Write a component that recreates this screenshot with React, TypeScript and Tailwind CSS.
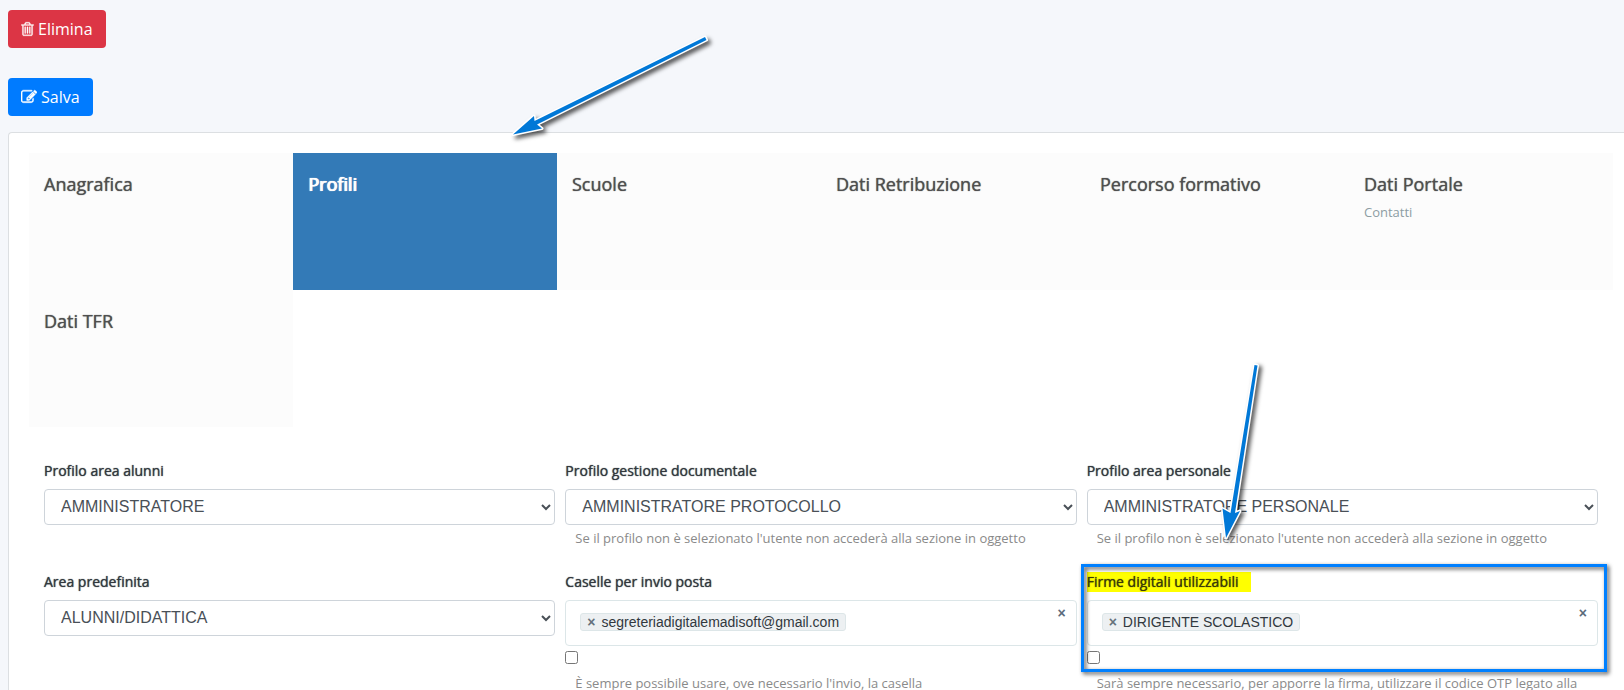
import { useState } from "react"
import type { ReactNode } from "react"

const tabs = [
    { title: "Anagrafica" },
    { title: "Profili" },
    { title: "Scuole" },
    { title: "Dati Retribuzione" },
    { title: "Percorso formativo" },
    { title: "Dati Portale", note: "Contatti" },
    { title: "Dati TFR" },
]

const profileHelp = "Se il profilo non è selezionato l'utente non accederà alla sezione in oggetto"

function TrashIcon(){
    return(
        <svg viewBox="192 0 1408 1792" className="h-4 w-[13px] fill-current stroke-current" strokeWidth="30" aria-hidden="true">
            <path d="M704 1376v-704q0-14-9-23t-23-9h-64q-14 0-23 9t-9 23v704q0 14 9 23t23 9h64q14 0 23-9t9-23zm256 0v-704q0-14-9-23t-23-9h-64q-14 0-23 9t-9 23v704q0 14 9 23t23 9h64q14 0 23-9t9-23zm256 0v-704q0-14-9-23t-23-9h-64q-14 0-23 9t-9 23v704q0 14 9 23t23 9h64q14 0 23-9t9-23zm128-864h-896v948q0 22 7 40.500t14.500 27 10.500 8.500h832q3 0 10.500-8.500t14.500-27 7-40.500v-948zm-672-128h448l-48-117q-7-9-17-11h-317q-10 2-17 11zm928 32v64q0 14-9 23t-23 9h-96v948q0 83-47 143.500t-113 60.500h-832q-66 0-113-58.500t-47-141.500v-952h-96q-14 0-23-9t-9-23v-64q0-14 9-23t23-9h309l70-167q15-37 54-63t79-26h320q40 0 79 26t54 63l70 167h309q14 0 23 9t9 23z"/>
        </svg>
    )
}

function EditIcon(){
    return(
        <svg viewBox="0 0 1792 1792" className="h-4 w-4 fill-current stroke-current" strokeWidth="50" aria-hidden="true">
            <path d="M888 1184l116-116-152-152-116 116v56h96v96h56zm440-720q-16-16-33 1l-350 350q-17 17-1 33t33-1l350-350q17-17 1-33zm80 594v190q0 119-84.500 203.500t-203.500 84.500h-832q-119 0-203.500-84.500t-84.500-203.500v-832q0-119 84.500-203.500t203.500-84.500h832q63 0 117 25 15 7 18 23 3 17-9 29l-49 49q-14 14-32 8-23-6-45-6h-832q-66 0-113 47t-47 113v832q0 66 47 113t113 47h832q66 0 113-47t47-113v-126q0-13 9-22l64-64q15-15 35-7t20 29zm-96-738l288 288-672 672h-288v-288zm444 132l-92 92-288-288 92-92q28-28 68-28t68 28l152 152q28 28 28 68t-28 68z"/>
        </svg>
    )
}

function SelectField({ id, label, value, help }: { id: string, label: string, value: string, help?: string }){
    return(
        <div className="h-[111px]">
            <label htmlFor={id} className="mb-2 block text-sm leading-5 font-medium text-[#32383e] [text-shadow:0_0_1px_currentColor]">{label}</label>
            <select id={id} className="h-9 w-full rounded border border-[#ced4da] bg-white px-3 pb-0.5 font-['Liberation_Sans',Arial,sans-serif] text-base text-[#495057]">
                <option>{value}</option>
            </select>
            {help && <p className="mt-[3px] px-2.5 text-[13px] leading-5 text-[#8a8a8a]">{help}</p>}
        </div>
    )
}

function TagField({ id, label, tag, help, marked, children }: { id: string, label: string, tag: string, help: string, marked?: boolean, children?: ReactNode }){
    return(
        <div className="relative">
            <label htmlFor={id} className="mb-2 block text-sm leading-5 font-medium text-[#32383e] [text-shadow:0_0_1px_currentColor]">
                <span className={marked ? "inline-block bg-[#ffff00] pr-3 text-[#3a3a08]" : ""}>{label}</span>
            </label>
            <div className="flex h-[46px] items-start justify-between rounded border border-[#dce6e8] bg-white pt-3 pr-2.5 pl-3.5 font-['Liberation_Sans',Arial,sans-serif]">
                <span className="flex h-[18px] items-center gap-1.5 rounded-[3px] border border-[#dde6e8] bg-[#edf0f2] px-1.5 text-sm text-[#32383e]">
                    <button type="button" aria-label={"Rimuovi " + tag} className="text-sm leading-4 font-bold text-[#66727c]">×</button>
                    {tag}
                </span>
                <button type="button" aria-label="Svuota" className="-mt-2 text-sm leading-4 font-bold text-[#5b6b7c]">×</button>
            </div>
            <input id={id} type="checkbox" className="mt-[5px] block h-[13px] w-[13px]"/>
            <p className="mt-3 px-2.5 text-[13px] leading-[14px] text-[#8a8a8a]">{help}</p>
            {children}
        </div>
    )
}

export default function App(){
    const [active,setActive] = useState<number>(1)

    return(
        <div className="relative flex min-h-screen flex-col items-start overflow-hidden bg-[#f5f7fb] pt-2.5 pl-2 font-['Open_Sans',sans-serif]">
            <button type="button" className="flex h-[38px] shrink-0 items-center gap-1 rounded bg-[#dc3545] px-[13px] text-base text-white">
                <TrashIcon/>
                Elimina
            </button>
            <button type="button" className="mt-[30px] flex h-[38px] shrink-0 items-center gap-1 rounded bg-[#007bff] px-[13px] text-base text-white">
                <EditIcon/>
                Salva
            </button>

            <div className="mt-4 w-full grow rounded-tl border-t border-l border-[#dcdfe2] bg-white pt-5 pr-[11px] pl-5">
                <nav className="grid grid-cols-6">
                    {tabs.map((tab,index)=>(
                        <a key={tab.title} href="#" onClick={()=>{setActive(index)}}
                        className={index === active ? "h-[137px] bg-[#337ab7] px-[15px] pt-[18px] text-white" : "h-[137px] bg-[#fcfcfc] px-[15px] pt-[18px] text-[#4f4f4f]"}>
                            <h4 className={index === active ? "text-lg leading-[26px] font-medium [text-shadow:0_0_1px_currentColor,1px_0_0_currentColor]" : "text-lg leading-[26px] font-medium [text-shadow:0_0_1px_currentColor]"}>{tab.title}</h4>
                            {tab.note && <p className="mt-[3px] text-[13px] leading-6 text-[#8d9da3]">{tab.note}</p>}
                        </a>
                    ))}
                </nav>

                <form className="mt-[34px] grid grid-cols-3 gap-x-2.5 px-[15px]">
                    <SelectField id="alunni" label="Profilo area alunni" value="AMMINISTRATORE"/>
                    <SelectField id="documentale" label="Profilo gestione documentale" value="AMMINISTRATORE PROTOCOLLO" help={profileHelp}/>
                    <SelectField id="personale" label="Profilo area personale" value="AMMINISTRATORE PERSONALE" help={profileHelp}/>
                    <SelectField id="area" label="Area predefinita" value="ALUNNI/DIDATTICA"/>
                    <TagField id="caselle" label="Caselle per invio posta" tag="segreteriadigitalemadisoft@gmail.com" help="È sempre possibile usare, ove necessario l'invio, la casella"/>
                    <TagField id="firme" label="Firme digitali utilizzabili" tag="DIRIGENTE SCOLASTICO" help="Sarà sempre necessario, per apporre la firma, utilizzare il codice OTP legato alla" marked>
                        {/* frame and arrow laid over the signature field */}
                        <div className="pointer-events-none absolute -top-2 -right-[9px] -left-1.5 h-[108px] border-3 border-[#0080ff] drop-shadow-[2px_2px_2px_rgba(0,0,0,0.7)]"/>
                        <svg viewBox="0 0 60 200" className="pointer-events-none absolute -top-[222px] left-[123px] h-[200px] w-[60px] drop-shadow-[3px_2px_2px_rgba(0,0,0,0.65)]" aria-hidden="true">
                            <path d="M44.500 15L47.500 15.500L25 163L30 161L16 188L12.500 158.500L20.500 163Z" fill="#0078d7" stroke="#fff" strokeWidth="3" strokeLinejoin="round" paintOrder="stroke"/>
                        </svg>
                    </TagField>
                </form>
            </div>

            <svg viewBox="0 0 220 130" className="pointer-events-none absolute top-[20px] left-[500px] h-[130px] w-[220px] drop-shadow-[3px_3px_2px_rgba(0,0,0,0.65)]" aria-hidden="true">
                <path d="M205 17L206.500 20L37 104.500L42 108.500L13 114.500L34 96L34.500 101Z" fill="#0078d7" stroke="#fff" strokeWidth="3" strokeLinejoin="round" paintOrder="stroke"/>
            </svg>
        </div>
    )
}
